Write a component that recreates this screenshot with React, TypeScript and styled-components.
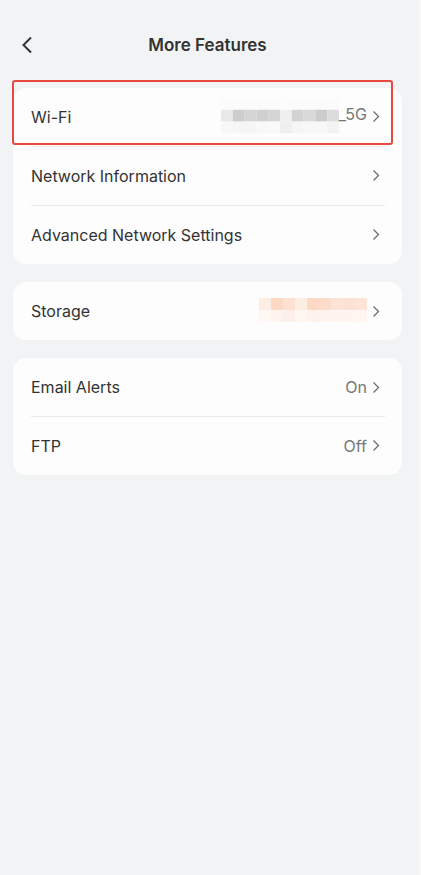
import React from "react";
import styled, { createGlobalStyle } from "styled-components";

const GlobalStyle = createGlobalStyle`
  html, body {
    margin: 0;
    padding: 0;
    background: #f8f8f9;
  }
  body {
    font-family: Inter, "Noto Sans", Roboto, sans-serif;
    -webkit-font-smoothing: antialiased;
  }
`;

const Page = styled.div`
  width: 419px;
  min-height: 875px;
  background: #f2f3f5;
  box-sizing: border-box;
  padding: 0 17px 0 13px;
  display: flex;
  flex-direction: column;
`;

const Header = styled.header`
  height: 88px;
  display: flex;
  align-items: flex-start;
  justify-content: center;
  position: relative;
  padding-top: 34px;
  box-sizing: border-box;
`;

const BackButton = styled.button`
  position: absolute;
  left: 4px;
  top: 35px;
  border: 0;
  background: none;
  padding: 0;
  width: 20px;
  height: 20px;
  display: flex;
  align-items: center;
  justify-content: center;
`;

const Title = styled.h1`
  margin: 0;
  font-size: 17px;
  line-height: 22px;
  font-weight: 600;
  color: #333;
`;

const Groups = styled.div`
  display: flex;
  flex-direction: column;
  gap: 18px;
`;

const Card = styled.div`
  background: #fdfdfd;
  border-radius: 13px;
  display: flex;
  flex-direction: column;
`;

const Row = styled.div`
  position: relative;
  height: 58px;
  display: flex;
  align-items: center;
  justify-content: space-between;
  padding: 0 22px 0 18px;
  box-sizing: border-box;

  & + & {
    height: 59px;
  }

  & + &::before {
    content: "";
    position: absolute;
    top: 0;
    left: 18px;
    right: 17px;
    height: 1px;
    background: #e9e9eb;
  }
`;

const Label = styled.span`
  font-size: 16px;
  color: #333;
`;

const Trail = styled.div`
  display: flex;
  align-items: center;
  gap: 5px;
`;

const Value = styled.span`
  font-size: 16px;
  color: #777;
`;

const MaskedValue = styled.div`
  display: flex;
  align-items: flex-end;

  svg {
    display: block;
    margin-top: -2px;
  }

  ${Value} {
    margin-bottom: 10px;
  }
`;

const Highlight = styled.div`
  position: absolute;
  left: -1px;
  top: -8px;
  width: 381px;
  height: 65px;
  box-sizing: border-box;
  border: 2px solid #e8483f;
  border-radius: 3px;
  pointer-events: none;
`;

const Chevron = () => (
  <svg width="8" height="13" viewBox="0 0 8 13">
    <path d="M1.5 1.5 L6.5 6.5 L1.5 11.5" fill="none" stroke="#666" strokeWidth="1.2" />
  </svg>
);

const Mosaic: React.FC<{ rows: string[][]; cell?: number }> = ({ rows, cell = 12 }) => (
  <svg width={rows[0].length * cell} height={rows.length * cell}>
    {rows.map((row, r) =>
      row.map((c, i) => <rect key={`${r}-${i}`} x={i * cell} y={r * cell} width={cell} height={cell} fill={c} />),
    )}
  </svg>
);

const wifiMosaic = [
  ["#fbfbfb", "#fbfbfb", "#fbfbfb", "#fbfbfb", "#fbfbfb", "#fcfcfc", "#fbfbfb", "#fbfbfb", "#fbfbfb", "#fbfbfb"],
  ["#e8e8e8", "#cdcdcd", "#d5d5d5", "#d0d0d0", "#d5d5d5", "#f0f0f0", "#d3d3d3", "#d9d9d9", "#cbcbcb", "#dcdcdc"],
  ["#f8f8f8", "#f6f6f6", "#f6f6f6", "#f8f8f8", "#f9f9f9", "#efefef", "#f6f6f6", "#f7f7f7", "#f8f8f8", "#f3f3f3"],
];

const storageMosaic = [
  ["#fdeee4", "#fdd9c5", "#fde2d3", "#fdeee4", "#fdd8c4", "#fddccb", "#fde3d7", "#fde2d3", "#fde5d7"],
  ["#fff8f4", "#fff3ef", "#fdefe9", "#fff6f1", "#fdf2ec", "#fff3ee", "#fff5f0", "#fff4ef", "#fff6f2"],
];

const App: React.FC = () => (
  <Page>
    <GlobalStyle />
    <Header>
      <BackButton aria-label="back">
        <svg width="14" height="18" viewBox="0 0 14 18">
          <path d="M11 1.5 L3.5 9 L11 16.5" fill="none" stroke="#333" strokeWidth="2" />
        </svg>
      </BackButton>
      <Title>More Features</Title>
    </Header>
    <Groups>
      <Card>
        <Row>
          <Label>Wi-Fi</Label>
          <Trail>
            <MaskedValue>
              <Mosaic rows={wifiMosaic} cell={11.8} />
              <Value>_5G</Value>
            </MaskedValue>
            <Chevron />
          </Trail>
          <Highlight />
        </Row>
        <Row>
          <Label>Network Information</Label>
          <Chevron />
        </Row>
        <Row>
          <Label>Advanced Network Settings</Label>
          <Chevron />
        </Row>
      </Card>
      <Card>
        <Row>
          <Label>Storage</Label>
          <Trail>
            <MaskedValue>
              <Mosaic rows={storageMosaic} />
            </MaskedValue>
            <Chevron />
          </Trail>
        </Row>
      </Card>
      <Card>
        <Row>
          <Label>Email Alerts</Label>
          <Trail>
            <Value>On</Value>
            <Chevron />
          </Trail>
        </Row>
        <Row>
          <Label>FTP</Label>
          <Trail>
            <Value>Off</Value>
            <Chevron />
          </Trail>
        </Row>
      </Card>
    </Groups>
  </Page>
);

export default App;
